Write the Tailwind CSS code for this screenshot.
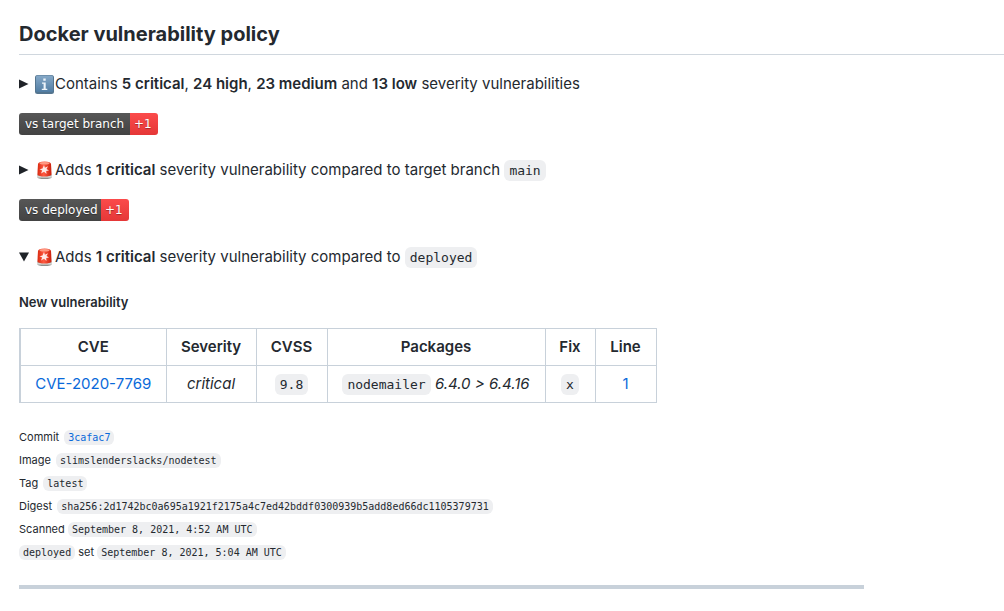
<!DOCTYPE html>
<html lang="en">
<head>
<meta charset="utf-8">
<meta name="viewport" content="width=device-width, initial-scale=1">
<title>Docker vulnerability policy</title>
<script src="https://cdn.jsdelivr.net/npm/@tailwindcss/browser@4"></script>
</head>
<body class="bg-white font-['Inter',sans-serif] text-[15px] leading-6 text-[#24292f]">
<svg class="absolute size-0" aria-hidden="true">
  <defs>
    <linearGradient id="blue" x1="0" y1="0" x2="0" y2="1"><stop offset="0" stop-color="#86a9c8"/><stop offset="1" stop-color="#517da3"/></linearGradient>
    <linearGradient id="red" x1="0" y1="0" x2="1" y2="0"><stop offset="0" stop-color="#d8290f"/><stop offset=".45" stop-color="#ff5a42"/><stop offset="1" stop-color="#c9200c"/></linearGradient>
    <linearGradient id="base" x1="0" y1="0" x2="0" y2="1"><stop offset="0" stop-color="#8b8b88"/><stop offset=".5" stop-color="#dededb"/><stop offset="1" stop-color="#777774"/></linearGradient>
    <symbol id="siren" viewBox="0 0 19 20">
      <path d="M2.500 14.500 L16.500 14.500 L17 17 Q16.500 19 9.500 19 Q2.500 19 2 17Z" fill="url(#base)"/>
      <path d="M3 4 Q3.200 1.500 9.500 1.500 Q15.800 1.500 16 4 L16.600 14.500 Q15 16.500 9.500 16.500 Q4 16.500 2.400 14.500Z" fill="url(#red)"/>
      <ellipse cx="9.500" cy="3.300" rx="5" ry="1.200" fill="#ff9a84"/>
      <path d="M9 5 L9.900 7.800 L13 6.200 L11.500 9 L14 10.500 L11.200 10.900 L11.500 14 L9 11.800 L6 13.500 L7.200 10.600 L4.500 9.200 L7.500 8.600Z" fill="#fff" fill-opacity=".88"/>
    </symbol>
  </defs>
</svg>
<main class="pt-5 pb-5 pl-[19px]">
  <h1 class="border-b border-[#d0d7de] pb-1.5 text-xl leading-7 font-bold">Docker vulnerability policy</h1>

  <details class="mt-[17px]">
    <summary class="flex h-6 items-center">
      <svg class="mr-1.5 size-2.5" viewBox="0 0 10 10" aria-hidden="true"><path d="M0 .5 9.500 5 0 9.500Z" fill="#1f2328"/></svg>
      <svg class="h-5 w-[19px]" viewBox="0 0 19 20" role="img" aria-label="Information"><rect x="0" y="1" width="19" height="19" rx="2.500" fill="#54758f"/><rect x="1" y="1.500" width="17" height="16.500" rx="1.500" fill="url(#blue)"/><path d="M8.300 4.500h2.400v2.200H8.300zM7 8.500h3.700v6.300h1.600V16H6.800v-1.200h1.800V9.700H7z" fill="#edf4fa"/></svg>
      <span class="ml-px">Contains <b class="font-semibold">5 critical</b>, <b class="font-semibold">24 high</b>, <b class="font-semibold">23 medium</b> and <b class="font-semibold">13 low</b> severity vulnerabilities</span>
    </summary>
  </details>

  <p class="mt-[17px] flex h-[22px] font-['DejaVu_Sans',sans-serif] text-xs leading-[22px] text-white [text-shadow:0_1px_1px_#0005]">
    <span class="w-[111px] rounded-l-[3px] bg-linear-to-b from-[#575757] to-[#434343] pl-1.5 whitespace-nowrap">vs target branch</span><span class="w-7 rounded-r-[3px] bg-linear-to-b from-[#fb4b4b] to-[#e53737] pl-1">+1</span>
  </p>

  <details class="mt-[23px]">
    <summary class="flex h-6 items-center">
      <svg class="mr-1.5 size-2.5" viewBox="0 0 10 10" aria-hidden="true"><path d="M0 .5 9.500 5 0 9.500Z" fill="#1f2328"/></svg>
      <svg class="h-5 w-[19px]" role="img" aria-label="Alert"><use href="#siren"/></svg>
      <span class="ml-px">Adds <b class="font-semibold">1 critical</b> severity vulnerability compared to target branch <code class="rounded-md bg-[#eeeff1] px-[5px] py-[3px] font-['DejaVu_Sans_Mono',monospace] text-[13px]">main</code></span>
    </summary>
  </details>

  <p class="mt-[17px] flex h-[22px] font-['DejaVu_Sans',sans-serif] text-xs leading-[22px] text-white [text-shadow:0_1px_1px_#0005]">
    <span class="w-[82px] rounded-l-[3px] bg-linear-to-b from-[#575757] to-[#434343] pl-1.5 whitespace-nowrap">vs deployed</span><span class="w-7 rounded-r-[3px] bg-linear-to-b from-[#fb4b4b] to-[#e53737] pl-1">+1</span>
  </p>

  <details open class="mt-6">
    <summary class="flex h-6 items-center">
      <svg class="mr-1.5 size-2.5" viewBox="0 0 10 10" aria-hidden="true"><path d="M0 .5h10L5 9.500Z" fill="#1f2328"/></svg>
      <svg class="h-5 w-[19px]" role="img" aria-label="Alert"><use href="#siren"/></svg>
      <span class="ml-px">Adds <b class="font-semibold">1 critical</b> severity vulnerability compared to <code class="rounded-md bg-[#eeeff1] px-[5px] py-[3px] font-['DejaVu_Sans_Mono',monospace] text-[13px]">deployed</code></span>
    </summary>
    <h2 class="mt-[23px] text-[13px] leading-5 font-semibold">New vulnerability</h2>
    <table class="mt-4 border-collapse border border-l-2 border-[#c8d1da] text-center whitespace-nowrap">
      <thead>
        <tr class="h-[37px]">
          <th class="w-[146px] border border-[#c8d1da] font-semibold">CVE</th>
          <th class="w-[90px] border border-[#c8d1da] font-semibold">Severity</th>
          <th class="w-[71px] border border-[#c8d1da] font-semibold">CVSS</th>
          <th class="w-[218px] border border-[#c8d1da] font-semibold">Packages</th>
          <th class="w-[50px] border border-[#c8d1da] font-semibold">Fix</th>
          <th class="w-[61px] border border-[#c8d1da] font-semibold">Line</th>
        </tr>
      </thead>
      <tbody>
        <tr class="h-[37px]">
          <td class="border border-[#c8d1da]"><a href="#" class="text-[#0969da]">CVE-2020-7769</a></td>
          <td class="border border-[#c8d1da] italic">critical</td>
          <td class="border border-[#c8d1da]"><code class="rounded-md bg-[#eeeff1] px-[5px] py-[3px] font-['DejaVu_Sans_Mono',monospace] text-[13px]">9.8</code></td>
          <td class="border border-[#c8d1da]"><code class="rounded-md bg-[#eeeff1] px-[5px] py-[3px] font-['DejaVu_Sans_Mono',monospace] text-[13px]">nodemailer</code> <i>6.4.0 &gt; 6.4.16</i></td>
          <td class="border border-[#c8d1da]"><code class="rounded-md bg-[#eeeff1] px-[5px] py-[3px] font-['DejaVu_Sans_Mono',monospace] text-[13px]">x</code></td>
          <td class="border border-[#c8d1da]"><a href="#" class="text-[#0969da]">1</a></td>
        </tr>
      </tbody>
    </table>
  </details>

  <div class="mt-[23px] text-[11px] leading-[23px]">
    <p>Commit <a href="#" class="ml-0.5 text-[#0969da]"><code class="rounded-md bg-[#eeeff1] px-1 py-0.5 font-['DejaVu_Sans_Mono',monospace] text-[10px]">3cafac7</code></a></p>
    <p>Image <code class="ml-0.5 rounded-md bg-[#eeeff1] px-1 py-0.5 font-['DejaVu_Sans_Mono',monospace] text-[10px]">slimslenderslacks/nodetest</code></p>
    <p>Tag <code class="ml-0.5 rounded-md bg-[#eeeff1] px-1 py-0.5 font-['DejaVu_Sans_Mono',monospace] text-[10px]">latest</code></p>
    <p>Digest <code class="ml-0.5 rounded-md bg-[#eeeff1] px-1 py-0.5 font-['DejaVu_Sans_Mono',monospace] text-[10px]">sha256:2d1742bc0a695a1921f2175a4c7ed42bddf0300939b5add8ed66dc1105379731</code></p>
    <p>Scanned <code class="rounded-md bg-[#eeeff1] px-1 py-0.5 font-['DejaVu_Sans_Mono',monospace] text-[10px]">September 8, 2021, 4:52 AM UTC</code></p>
    <p><code class="rounded-md bg-[#eeeff1] px-1 py-0.5 font-['DejaVu_Sans_Mono',monospace] text-[10px]">deployed</code> set <code class="rounded-md bg-[#eeeff1] px-1 py-0.5 font-['DejaVu_Sans_Mono',monospace] text-[10px]">September 8, 2021, 5:04 AM UTC</code></p>
  </div>

  <hr class="mt-[21px] mr-[140px] h-1 border-0 bg-[#c8d1da]">
</main>
</body>
</html>
